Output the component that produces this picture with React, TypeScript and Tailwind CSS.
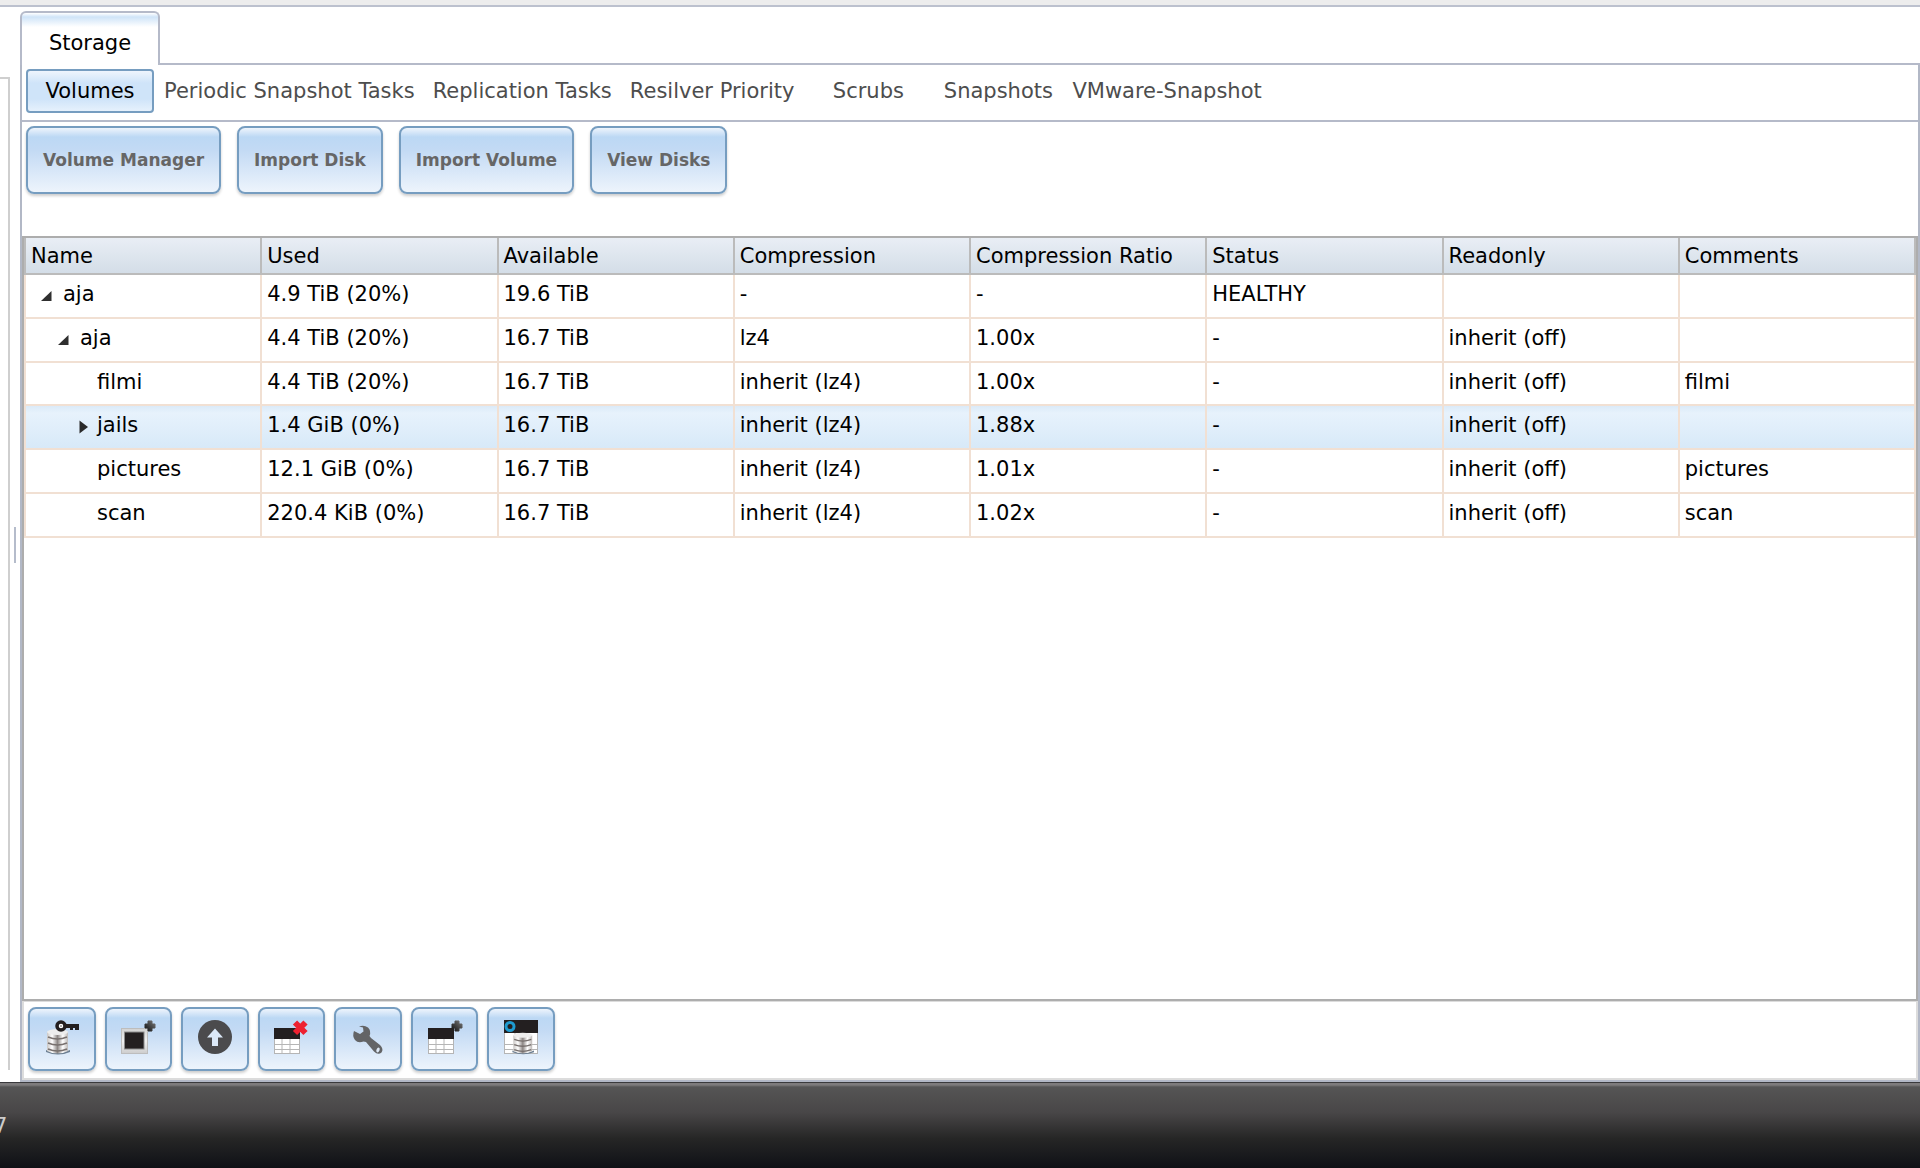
import { useState } from 'react';
import type { ReactNode } from 'react';

interface Dataset {
  id: string;
  name: string;
  level: number;
  state?: 'open' | 'closed';
  used: string;
  available: string;
  compression: string;
  ratio: string;
  status: string;
  readonly: string;
  comments: string;
}

const datasets: Dataset[] = [
  { id: 'aja', name: 'aja', level: 0, state: 'open', used: '4.9 TiB (20%)', available: '19.6 TiB', compression: '-', ratio: '-', status: 'HEALTHY', readonly: '', comments: '' },
  { id: 'aja/aja', name: 'aja', level: 1, state: 'open', used: '4.4 TiB (20%)', available: '16.7 TiB', compression: 'lz4', ratio: '1.00x', status: '-', readonly: 'inherit (off)', comments: '' },
  { id: 'aja/filmi', name: 'filmi', level: 2, used: '4.4 TiB (20%)', available: '16.7 TiB', compression: 'inherit (lz4)', ratio: '1.00x', status: '-', readonly: 'inherit (off)', comments: 'filmi' },
  { id: 'aja/jails', name: 'jails', level: 2, state: 'closed', used: '1.4 GiB (0%)', available: '16.7 TiB', compression: 'inherit (lz4)', ratio: '1.88x', status: '-', readonly: 'inherit (off)', comments: '' },
  { id: 'aja/pictures', name: 'pictures', level: 2, used: '12.1 GiB (0%)', available: '16.7 TiB', compression: 'inherit (lz4)', ratio: '1.01x', status: '-', readonly: 'inherit (off)', comments: 'pictures' },
  { id: 'aja/scan', name: 'scan', level: 2, used: '220.4 KiB (0%)', available: '16.7 TiB', compression: 'inherit (lz4)', ratio: '1.02x', status: '-', readonly: 'inherit (off)', comments: 'scan' },
];

const columns = ['Name', 'Used', 'Available', 'Compression', 'Compression Ratio', 'Status', 'Readonly', 'Comments'];

const tabs = [
  'Volumes',
  'Periodic Snapshot Tasks',
  'Replication Tasks',
  'Resilver Priority',
  'Scrubs',
  'Snapshots',
  'VMware-Snapshot',
];

const actions = ['Volume Manager', 'Import Disk', 'Import Volume', 'View Disks'];

const indents = ['pl-[13px]', 'pl-[30px]', 'pl-[47px]'];

const buttonLook =
  'rounded-lg border-2 border-[#769dc0] bg-[linear-gradient(to_bottom,#eef4fc_0px,#bcd8f4_9px,#c3daf4_35%,#edf4fc_100%)] shadow-[0_2px_3px_rgba(0,0,0,0.2)]';

function Database() {
  return (
    <>
      <path d="M1 30 Q13 36 25 30 L25 32 Q13 37 1 32Z" fill="#6c7f92" />
      <path d="M2 12 V31 Q12.500 36 23 31 V12Z" fill="url(#metal)" />
      <ellipse cx="12.500" cy="12" rx="10.500" ry="3" fill="#ededed" />
      <path d="M3 17 Q12.500 21 22 17 M3 23 Q12.500 27 22 23 M3 29 Q12.500 33 22 29" fill="none" stroke="#77706e" strokeWidth="1.600" />
    </>
  );
}

function Grid({ width, top, head }: { width: number; top: number; head: number }) {
  const step = width > 30 ? 11 : 8;
  return (
    <>
      <rect x="0" y={top} width={width} height={34 - top} fill="#fff" />
      <path
        d={`M.5 ${head}V34 M${step} ${head}V34 M${step * 2} ${head}V34 M${width - 0.5} ${head}V34 M0 24.500H${width} M0 29.500H${width} M0 33.500H${width}`}
        fill="none"
        stroke="#b5b5b5"
      />
      <rect x="0" y={top} width={width} height={head - top} fill="#231f20" />
    </>
  );
}

function Plus() {
  return <path d="M27 1h4v3h3v4h-3v3h-4v-3h-3v-4h3z" fill="url(#plus)" stroke="url(#plus)" strokeLinejoin="round" />;
}

function Icon({ children }: { children: ReactNode }) {
  return (
    <svg className="h-[34px] w-[34px] overflow-visible" viewBox="0 0 34 34" aria-hidden="true">
      <defs>
        <linearGradient id="metal">
          <stop offset="0" stopColor="#c9c6c4" />
          <stop offset="0.25" stopColor="#fff" />
          <stop offset="0.5" stopColor="#8d8785" />
          <stop offset="0.75" stopColor="#fff" />
          <stop offset="1" stopColor="#bdb9b7" />
        </linearGradient>
        <linearGradient id="plus" x1="0" y1="1" x2="1" y2="0">
          <stop offset="0" stopColor="#111" />
          <stop offset="1" stopColor="#777" />
        </linearGradient>
        <linearGradient id="frame" x1="0" y1="0" x2="0" y2="1">
          <stop offset="0" stopColor="#d2d2d2" />
          <stop offset="0.5" stopColor="#f0f0f0" />
          <stop offset="1" stopColor="#cdcdcd" />
        </linearGradient>
      </defs>
      {children}
    </svg>
  );
}

const tools = [
  {
    label: 'Change Passphrase',
    icon: (
      <Icon>
        <Database />
        <circle cx="16" cy="6" r="4" fill="#fff" stroke="#231f20" strokeWidth="3.500" />
        <circle cx="16" cy="6" r="1" fill="#999" />
        <path d="M20 4H34V10H30V8H28V10H25V8H20Z" fill="#231f20" />
      </Icon>
    ),
  },
  {
    label: 'Create Dataset',
    icon: (
      <Icon>
        <rect x="0.500" y="8.500" width="26" height="25" fill="url(#frame)" stroke="#bdbdbd" />
        <rect x="3.500" y="12" width="19.500" height="17" fill="#231f20" stroke="#8c8c8c" />
        <Plus />
      </Icon>
    ),
  },
  {
    label: 'Upgrade',
    icon: (
      <Icon>
        <circle cx="17" cy="17" r="17" fill="#4b4b4d" />
        <path d="M17 8.500 L25 17.500 H20 V26 H14 V17.500 H9Z" fill="#dce9f8" />
      </Icon>
    ),
  },
  {
    label: 'Destroy Dataset',
    icon: (
      <Icon>
        <Grid width={26} top={8} head={19} />
        <path d="M21 2.500 L31.500 13 M31.500 2.500 L21 13" stroke="#ee2130" strokeWidth="6" />
      </Icon>
    ),
  },
  {
    label: 'Edit Options',
    icon: (
      <Icon>
        <path
          d="M3 11 L9 14 L12.500 11.500 L12 7.500 L8 6.500 Q13 4.500 17 7.500 Q20.500 11 18.500 16 L20 18 L29 25 Q33 29 30.500 32.500 Q27 35.500 23 31.500 L15 22 L12.500 21.500 Q7 23.500 4 20 Q1 16 3 11Z"
          fill="#636466"
        />
        <ellipse cx="27" cy="30" rx="1.500" ry="2.500" transform="rotate(25 27 30)" fill="#dfeaf7" />
      </Icon>
    ),
  },
  {
    label: 'Create zvol',
    icon: (
      <Icon>
        <Grid width={26} top={8} head={19} />
        <Plus />
      </Icon>
    ),
  },
  {
    label: 'Create Snapshot',
    icon: (
      <Icon>
        <Grid width={34} top={0} head={13} />
        <g transform="translate(7.500 5) scale(0.900 0.850)">
          <Database />
        </g>
        <circle cx="6" cy="6.500" r="4" fill="none" stroke="#1e9bd0" strokeWidth="3" />
      </Icon>
    ),
  },
];

function Expando({ state }: { state?: 'open' | 'closed' }) {
  return (
    <svg className="mt-1 h-4 w-4 shrink-0" viewBox="0 0 16 16" aria-hidden="true">
      {state === 'open' && <path d="M12.500 3V13H2Z" fill="#2f2f2f" />}
      {state === 'closed' && <path d="M6.500 1.500L15 8L6.500 14.500Z" fill="#2a2a2a" />}
    </svg>
  );
}

export default function App() {
  const [activeTab, setActiveTab] = useState('Volumes');
  const [hovered, setHovered] = useState('aja/jails');

  return (
    <div className="flex h-screen flex-col overflow-hidden bg-white font-['DejaVu_Sans',sans-serif] text-[21px] leading-6 text-black">
      <div className="h-[7px] shrink-0 border-b-2 border-[#bcc1ce] bg-[#ededed]" />

      <div className="flex min-h-0 flex-1">
        {/* Edge of the navigation tree and the splitter */}
        <div className="mt-[70px] mb-3 w-[10px] shrink-0 border-t-2 border-r-2 border-[#cfcfcf]" />
        <div className="flex w-[10px] shrink-0 items-center justify-center">
          <div className="h-9 w-[2px] bg-[#b5bccb]" />
        </div>

        <main className="flex min-w-0 flex-1 flex-col pt-1">
          {/* Main tab */}
          <div className="flex">
            <button className="h-[54px] w-[140px] rounded-t-md border-2 border-b-0 border-[#b5bac9] bg-[linear-gradient(to_bottom,#fff_0px,#cfe4f8_4px,#fff_14px)] pt-2">
              Storage
            </button>
            <div className="flex-1 border-b-2 border-[#b5bac9]" />
          </div>

          <div className="flex min-h-0 flex-1 flex-col border-x-2 border-b-2 border-[#b2b8c6]">
            {/* Sub tabs */}
            <nav className="flex h-[57px] shrink-0 items-start gap-[2px] border-b-2 border-[#b5bac9] px-1 pt-1">
              {tabs.map(tab => (
                <button
                  key={tab}
                  onClick={() => setActiveTab(tab)}
                  className={
                    tab === activeTab
                      ? 'h-11 min-w-32 rounded border-2 border-[#769dc0] bg-[linear-gradient(to_bottom,#eef5fd_0px,#cfe4f9_12px,#cfe4f9_70%,#e6f1fc_100%)] px-2 whitespace-nowrap'
                      : 'h-11 min-w-32 px-2 whitespace-nowrap text-[#4d4d4d]'
                  }
                >
                  {tab}
                </button>
              ))}
            </nav>

            {/* Volume actions */}
            <div className="flex shrink-0 gap-4 px-1 pt-1 pb-[42px]">
              {actions.map(action => (
                <button key={action} className={`h-[68px] px-[15px] text-[17px] font-bold whitespace-nowrap text-[#666] ${buttonLook}`}>
                  {action}
                </button>
              ))}
            </div>

            {/* Volumes table */}
            <div className="min-h-0 flex-1 border-2 border-[#adadad]">
              <table className="h-[300px] w-full table-fixed border-collapse">
                <thead>
                  <tr className="bg-linear-to-b from-[#e9eef5] to-[#d3dde7]">
                    {columns.map(col => (
                      <th key={col} scope="col" className="h-9 border-x-2 border-b-2 border-[#bbb] px-[5px] text-left font-normal whitespace-nowrap">
                        {col}
                      </th>
                    ))}
                  </tr>
                </thead>
                <tbody>
                  {datasets.map(ds => (
                    <tr
                      key={ds.id}
                      onMouseEnter={() => setHovered(ds.id)}
                      className={ds.id === hovered ? 'bg-[linear-gradient(to_bottom,#d9e9f8_0px,#e7f2fc_8px,#d7e9f8_100%)]' : 'bg-white'}
                    >
                      <td className="h-[43px] border-2 border-[#f1e0d3] pb-1">
                        <div className={`flex items-center gap-2 ${indents[ds.level]}`}>
                          <Expando state={ds.state} />
                          {ds.name}
                        </div>
                      </td>
                      {[ds.used, ds.available, ds.compression, ds.ratio, ds.status, ds.readonly, ds.comments].map((value, i) => (
                        <td key={columns[i + 1]} className="border-2 border-[#f1e0d3] px-[5px] pb-1 whitespace-nowrap">
                          {value}
                        </td>
                      ))}
                    </tr>
                  ))}
                </tbody>
              </table>
            </div>

            {/* Tools for the selected volume */}
            <div className="shrink-0 border-2 border-t border-[#dcdcdc] px-1 pt-[5px] pb-[7px]">
              <div className="grid w-[527px] grid-cols-7 gap-[9px]">
                {tools.map(tool => (
                  <button key={tool.label} aria-label={tool.label} className={`flex h-16 justify-center pt-[11px] ${buttonLook}`}>
                    {tool.icon}
                  </button>
                ))}
              </div>
            </div>
          </div>
        </main>
      </div>

      <footer className="flex h-[86px] shrink-0 items-center justify-start border-t border-[#3a3a3c] bg-[linear-gradient(to_bottom,#7d7b7c_0px,#7d7b7c_2px,#555_4px,#484647_35%,#262626_65%,#0f1116_100%)] text-[#ccc]">
        <span className="-ml-[6px] pb-[0px]">7</span>
      </footer>
    </div>
  );
}
